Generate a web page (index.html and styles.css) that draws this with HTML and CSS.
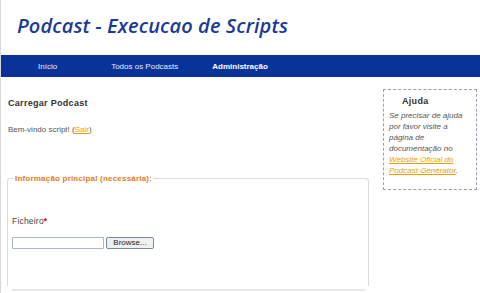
FILE: index.html
```html
<!DOCTYPE html>
<html lang="pt">
<head>
<meta charset="utf-8">
<title>Podcast - Execucao de Scripts</title>
<link rel="stylesheet" href="styles.css">
</head>
<body>
<div class="page">
  <header class="header">
    <h1 class="title">Podcast - Execucao de Scripts</h1>
  </header>
  <nav class="nav">
    <a class="nav-item nav-home" href="#">Início</a>
    <a class="nav-item nav-all" href="#">Todos os Podcasts</a>
    <a class="nav-item nav-admin" href="#">Administração</a>
  </nav>
  <div class="main">
    <div class="content">
      <h2 class="section-title">Carregar Podcast</h2>
      <p class="welcome">Bem-vindo script! (<a class="link" href="#">Sair</a>)</p>
      <fieldset class="box">
        <legend class="legend">Informação principal (necessária):</legend>
        <label class="field-label">Ficheiro<span class="req">*</span></label>
        <div class="file-row">
          <span class="file-input"></span>
          <button class="browse" type="button">Browse...</button>
        </div>
        <div class="divider"></div>
      </fieldset>
    </div>
    <aside class="sidebar">
      <h3 class="side-title">Ajuda</h3>
      <p class="side-text">Se precisar de ajuda por favor visite a página de documentação no <a class="link" href="#">Website Oficial do Podcast Generator</a>.</p>
    </aside>
  </div>
</div>
</body>
</html>
```
FILE: styles.css
```css
html, body {
  margin: 0;
  padding: 0;
  background: #ffffff;
}
.page {
  min-height: 293px;
  border-left: 1px solid #d8d8d8;
  font-family: "Liberation Sans", Arial, sans-serif;
  overflow: hidden;
}
.header {
  height: 55px;
  box-sizing: border-box;
  padding: 13px 0 0 16px;
}
.title {
  margin: 0;
  font-family: "Open Sans", sans-serif;
  font-style: italic;
  font-weight: 600;
  font-size: 20px;
  line-height: 26px;
  color: #1a3a98;
  letter-spacing: 0.1px;
}
.nav {
  height: 22px;
  background: #0a3399;
  display: flex;
  align-items: center;
}
.nav-item {
  color: #e6ecf8;
  text-decoration: none;
  font-size: 8px;
  letter-spacing: 0;
}
.nav-home { margin-left: 37px; }
.nav-all { margin-left: 54px; }
.nav-admin { margin-left: 34px; font-weight: bold; color: #ffffff; }
.main {
  display: flex;
  align-items: flex-start;
}
.content {
  width: 362px;
  padding: 20px 0 0 6px;
}
.section-title {
  margin: 0 0 0 1px;
  font-size: 9px;
  line-height: 12px;
  font-weight: bold;
  color: #333;
  letter-spacing: 0.3px;
}
.welcome {
  margin: 15px 0 0 1px;
  font-size: 8px;
  line-height: 12px;
  color: #555;
}
.link {
  color: #e8a000;
  text-decoration: underline;
}
.box {
  margin: 38px 0 0 0;
  padding: 32px 3px 0 4px;
  border: 1px solid #dcdcdc;
  border-bottom: none;
  border-radius: 3px 3px 0 0;
  height: 112px;
  box-sizing: border-box;
}
.legend {
  padding: 0 1px;
  margin-left: 2px;
  font-size: 8px;
  font-weight: bold;
  color: #e77a1a;
  letter-spacing: 0.2px;
}
.field-label {
  display: block;
  font-size: 8.5px;
  line-height: 12px;
  color: #444;
  letter-spacing: 0.2px;
}
.req { color: #d00000; font-weight: bold; }
.file-row {
  display: flex;
  align-items: center;
  gap: 2px;
  margin-top: 10px;
}
.file-input {
  width: 90px;
  height: 10px;
  border: 1px solid #a8b8cc;
  border-radius: 1px;
  background: #fff;
}
.browse {
  width: 48px;
  height: 12px;
  padding: 0;
  font-family: "Liberation Sans", Arial, sans-serif;
  font-size: 8px;
  line-height: 10px;
  color: #222;
  background: #f0f0f0;
  border: 1px solid #7a8aa0;
  border-radius: 2px;
}
.divider {
  margin-top: 40px;
  border-top: 2px solid #e8e8e8;
}
.sidebar {
  margin: 12px 0 0 14px;
  width: 94px;
  height: 101px;
  box-sizing: border-box;
  border: 1px dashed #9a9ac8;
  padding: 5px 4px 0 5px;
}
.side-title {
  margin: 0 0 0 13px;
  font-size: 9px;
  line-height: 12px;
  font-weight: bold;
  color: #333;
  letter-spacing: 0.3px;
}
.side-text {
  margin: 3px 0 0 0;
  font-size: 8px;
  line-height: 11px;
  font-style: italic;
  color: #555;
}
```
